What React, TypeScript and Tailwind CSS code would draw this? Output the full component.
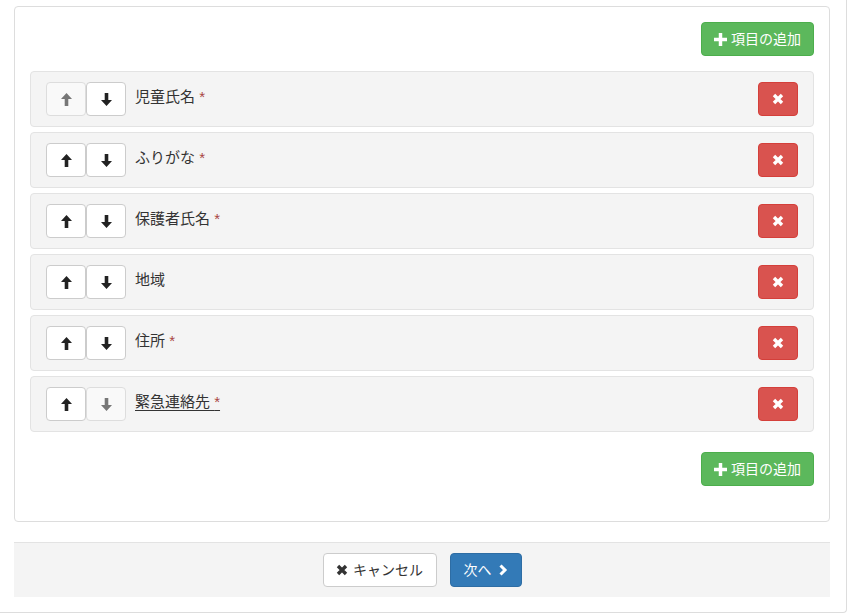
const items = [
  { label: "児童氏名", required: true },
  { label: "ふりがな", required: true },
  { label: "保護者氏名", required: true },
  { label: "地域", required: false },
  { label: "住所", required: true },
  { label: "緊急連絡先", required: true, link: true },
];

const ArrowIcon = ({ down = false }: { down?: boolean }) => (
  <svg
    width="11"
    height="13"
    viewBox="0 0 11 13"
    className={down ? "rotate-180" : ""}
  >
    <path d="M5.5 0 L11 6 H7.3 V13 H3.7 V6 H0 Z" fill="currentColor" />
  </svg>
);

const PlusIcon = () => (
  <svg width="13" height="13" viewBox="0 0 12 12">
    <path
      d="M4.4 0 H7.6 V4.4 H12 V7.6 H7.6 V12 H4.4 V7.6 H0 V4.4 H4.4 Z"
      fill="currentColor"
    />
  </svg>
);

const RemoveIcon = () => (
  <svg width="12" height="12" viewBox="0 0 12 12">
    <path
      d="M2 2 L10 10 M10 2 L2 10"
      stroke="currentColor"
      strokeWidth="3.4"
      fill="none"
    />
  </svg>
);

const ChevronIcon = () => (
  <svg width="10" height="12" viewBox="0 0 10 12">
    <path
      d="M2.5 1.5 L7 6 L2.5 10.5"
      stroke="currentColor"
      strokeWidth="3"
      fill="none"
    />
  </svg>
);

const AddButton = () => (
  <button className="flex items-center gap-[4px] h-[34px] px-[12px] rounded-[4px] bg-[#5cb85c] border border-[#4cae4c] text-white text-[14px]">
    <PlusIcon />
    項目の追加
  </button>
);

const MoveButton = ({ down, disabled }: { down?: boolean; disabled?: boolean }) => (
  <button
    className={
      disabled
        ? "flex items-center justify-center w-[40px] h-[34px] rounded-[4px] border border-[#ddd] bg-[#f9f9f9] text-[#777]"
        : "flex items-center justify-center w-[40px] h-[34px] rounded-[4px] border border-[#ccc] bg-white text-[#222]"
    }
  >
    <ArrowIcon down={down} />
  </button>
);

export default function App() {
  return (
    <div className="w-[847px] pt-[6px] bg-white border-r border-b border-[#ddd] rounded-br-[4px] font-['Liberation_Sans','Noto_Sans_CJK_JP',sans-serif] text-[#333]">
      <div className="ml-[14px] w-[816px] border border-[#ddd] rounded-[4px] px-[15px] pt-[15px] pb-[35px]">
        <div className="flex justify-end mb-[15px]">
          <AddButton />
        </div>
        <div className="flex flex-col gap-[5px]">
          {items.map((item, i) => (
            <div
              key={item.label}
              className="flex items-center px-[15px] py-[10px] bg-[#f4f4f4] border border-[#e3e3e3] rounded-[4px]"
            >
              <div className="flex">
                <MoveButton disabled={i === 0} />
                <MoveButton down disabled={i === items.length - 1} />
              </div>
              <span
                className={
                  item.link
                    ? "ml-[9px] mb-[3px] text-[15px] underline underline-offset-[3px]"
                    : "ml-[9px] mb-[3px] text-[15px]"
                }
              >
                {item.label}
                {item.required && (
                  <>
                    {" "}
                    <span className="text-[#a94442]">*</span>
                  </>
                )}
              </span>
              <button className="ml-auto flex items-center justify-center w-[40px] h-[34px] rounded-[4px] bg-[#d9534f] border border-[#d43f3a] text-white">
                <RemoveIcon />
              </button>
            </div>
          ))}
        </div>
        <div className="flex justify-end mt-[20px]">
          <AddButton />
        </div>
      </div>
      <div className="ml-[14px] w-[816px] mt-[20px] mb-[15px] bg-[#f4f4f4] border-t border-[#e3e3e3] py-[10px] flex justify-center gap-[13px]">
        <button className="flex items-center gap-[5px] h-[34px] w-[114px] justify-center rounded-[4px] bg-white border border-[#ccc] text-[14px] text-[#333]">
          <RemoveIcon />
          キャンセル
        </button>
        <button className="flex items-center gap-[6px] h-[34px] w-[72px] justify-center rounded-[4px] bg-[#337ab7] border border-[#2e6da4] text-[14px] text-white">
          次へ
          <ChevronIcon />
        </button>
      </div>
    </div>
  );
}
